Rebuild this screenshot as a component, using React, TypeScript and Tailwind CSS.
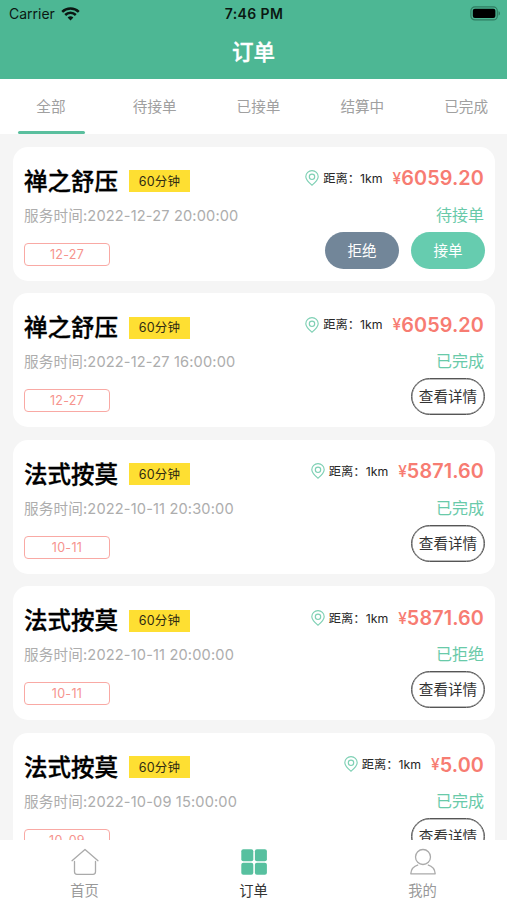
import React from "react";

type Order = {
  name: string;
  time: string;
  day: string;
  price: string;
  status: string;
  pending?: boolean;
};

const orders: Order[] = [
  { name: "禅之舒压", time: "2022-12-27 20:00:00", day: "12-27", price: "6059.20", status: "待接单", pending: true },
  { name: "禅之舒压", time: "2022-12-27 16:00:00", day: "12-27", price: "6059.20", status: "已完成" },
  { name: "法式按莫", time: "2022-10-11 20:30:00", day: "10-11", price: "5871.60", status: "已完成" },
  { name: "法式按莫", time: "2022-10-11 20:00:00", day: "10-11", price: "5871.60", status: "已拒绝" },
  { name: "法式按莫", time: "2022-10-09 15:00:00", day: "10-09", price: "5.00", status: "已完成" },
];

const tabs = ["全部", "待接单", "已接单", "结算中", "已完成"];

function WifiIcon() {
  return (
    <svg width="19" height="14" viewBox="0 0 19 14" fill="none" stroke="#0b1712" strokeWidth="2.5">
      <path d="M1.2 4.8a11.8 11.8 0 0 1 16.6 0" />
      <path d="M4.2 8a7.5 7.5 0 0 1 10.6 0" />
      <path d="M9.5 13.6 6.6 10.6a4.1 4.1 0 0 1 5.8 0z" fill="#0b1712" stroke="none" />
    </svg>
  );
}

function BatteryIcon() {
  return (
    <svg width="31" height="15" viewBox="0 0 31 15">
      <rect x="0.9" y="0.9" width="26.4" height="13" rx="4" fill="none" stroke="#2f7d61" strokeWidth="1.2" />
      <rect x="2.8" y="2.8" width="22.6" height="9.2" rx="2" fill="#000" />
      <path d="M28.6 5.2v4.4c1.7-.6 1.7-3.8 0-4.4z" fill="#2c7459" />
    </svg>
  );
}

function PinIcon() {
  return (
    <svg width="14" height="16" viewBox="0 0 14 16" fill="none" stroke="#7ed0b4" strokeWidth="1.15">
      <path d="M7 15.2C4.4 13 .8 10 .8 6.7a6.2 6.1 0 0 1 12.4 0c0 3.3-3.6 6.3-6.2 8.5z" />
      <circle cx="7" cy="6.8" r="2.7" />
    </svg>
  );
}

function OrderCard({ order }: { order: Order }) {
  return (
    <article className="flex h-[134px] shrink-0 justify-between rounded-[15px] bg-white pr-[11px] pl-[11px]">
      <div className="flex flex-col items-start pt-[17px]">
        <div className="flex h-[35px] items-center">
          <h2 className="text-[23.5px] leading-[35px] font-medium text-black [-webkit-text-stroke:0.35px_black]">
            {order.name}
          </h2>
          <span className="ml-[11px] flex h-[22px] w-[61px] items-center justify-center bg-[#fedf32] pt-[2px] text-[12.5px] tracking-[0.2px] text-[#302b12]">
            60分钟
          </span>
        </div>
        <p className="h-[33px] pt-px text-[14.6px] leading-[33px] tracking-[0.15px] whitespace-nowrap text-[#adadad]">
          服务时间:{order.time}
        </p>
        <span className="mt-[11px] flex h-[23px] w-[86px] items-center justify-center rounded-[4px] border border-[#f9a9a4] pt-[2px] text-[12.5px] tracking-[0.3px] text-[#f6938d]">
          {order.day}
        </span>
      </div>
      <div className="flex flex-col items-end pt-[15px]">
        <div className="flex h-[33px] items-center">
          <PinIcon />
          <span className="ml-[4px] pt-[2px] text-[12.3px] text-[#262626]">距离：1km</span>
          <span className="ml-[10px] pt-px text-[15.5px] font-medium text-[#f77c72]">¥</span>
          <span className="pt-[2px] text-[19.8px] font-semibold tracking-[0.12px] text-[#f77c72]">{order.price}</span>
        </div>
        <div className="mt-[4px] h-[33px] text-[16px] leading-[33px] text-[#69caa9]">{order.status}</div>
        {order.pending ? (
          <div className="-mr-px flex gap-[12px]">
            <button className="h-[37px] w-[74px] rounded-full bg-[#728699] pt-[3px] text-[14.6px] text-white">拒绝</button>
            <button className="h-[37px] w-[74px] rounded-full bg-[#66ccaf] pt-[3px] text-[14.6px] text-white">接单</button>
          </div>
        ) : (
          <button className="-mr-px flex h-[37px] w-[74px] items-center justify-center rounded-full border-[1.5px] border-[#555] pt-[3px] text-[14.6px] whitespace-nowrap text-[#333] shadow-[inset_0_0_0_0.5px_#777]">
            查看详情
          </button>
        )}
      </div>
    </article>
  );
}

export default function App() {
  return (
    <div className="flex h-[900px] w-[507px] flex-col overflow-hidden bg-[#f5f5f5] font-['Inter','Noto_Sans_CJK_SC',sans-serif]">
      <header className="h-[79px] shrink-0 bg-[#4db794]">
        <div className="grid h-[27px] grid-cols-3 items-center pr-[6px] pl-[9px] text-[14px] text-[#0b1712]">
          <div className="flex items-center gap-[6px]">
            <span>Carrier</span>
            <WifiIcon />
          </div>
          <span className="-ml-[2px] text-center font-semibold tracking-[0.4px]">7:46 PM</span>
          <div className="flex justify-end">
            <BatteryIcon />
          </div>
        </div>
        <h1 className="text-center text-[21.5px] leading-[50px] font-medium text-white [-webkit-text-stroke:0.35px_white]">
          订单
        </h1>
      </header>

      <nav className="h-[55px] shrink-0 overflow-hidden bg-white">
        <div className="-ml-px flex h-full w-[519px]">
          {tabs.map((tab, i) => (
            <div key={tab} className="flex w-[103.8px] shrink-0 flex-col items-center justify-between text-[14.6px] text-[#a0a0a0]">
              <span className="leading-[56px]">{tab}</span>
              {i === 0 && <span className="-mt-[4px] ml-[2px] h-[3px] w-[67px] shrink-0 rounded-full bg-[#5abf9e]" />}
            </div>
          ))}
        </div>
      </nav>

      <main className="flex min-h-0 flex-1 flex-col gap-[12.6px] overflow-hidden pt-[12.5px] pr-[12px] pl-[13px]">
        {orders.map((order) => (
          <OrderCard key={order.time} order={order} />
        ))}
      </main>

      <footer className="grid h-[60px] shrink-0 grid-cols-3 bg-white text-[14.3px] text-[#999]">
        <div className="flex flex-col items-center pt-[8px]">
          <svg width="28" height="28" viewBox="0 0 28 28" fill="none" stroke="#aaa" strokeWidth="1.3" strokeLinecap="round" strokeLinejoin="round">
            <path d="M1 12.7 14 1.5l13 11.2" />
            <path d="M3.5 13.5v10.3a2.5 2.5 0 0 0 2.5 2.5h16a2.5 2.5 0 0 0 2.5-2.5V13.5" />
          </svg>
          <span className="mt-[4px] leading-[22px]">首页</span>
        </div>
        <div className="flex flex-col items-center pt-[8px] text-[#333]">
          <svg width="28" height="28" viewBox="0 0 28 28" fill="#57c09f">
            <rect x="1.3" y="1.3" width="12" height="12" rx="2" />
            <rect x="14.9" y="1.3" width="12" height="12" rx="2" />
            <rect x="1.3" y="14.8" width="12" height="12" rx="2" />
            <rect x="14.9" y="14.8" width="12" height="12" rx="2" />
          </svg>
          <span className="mt-[4px] leading-[22px]">订单</span>
        </div>
        <div className="flex flex-col items-center pt-[8px]">
          <svg width="28" height="28" viewBox="0 0 28 28" fill="none" stroke="#aaa" strokeWidth="1.3" strokeLinejoin="round">
            <circle cx="14" cy="9" r="7.5" />
            <path d="M9.2 16.8C5 18 2 21.3 1.8 25.8h24.400c-.2-4.500-3.200-7.800-7.400-9" />
          </svg>
          <span className="mt-[4px] leading-[22px]">我的</span>
        </div>
      </footer>
    </div>
  );
}
